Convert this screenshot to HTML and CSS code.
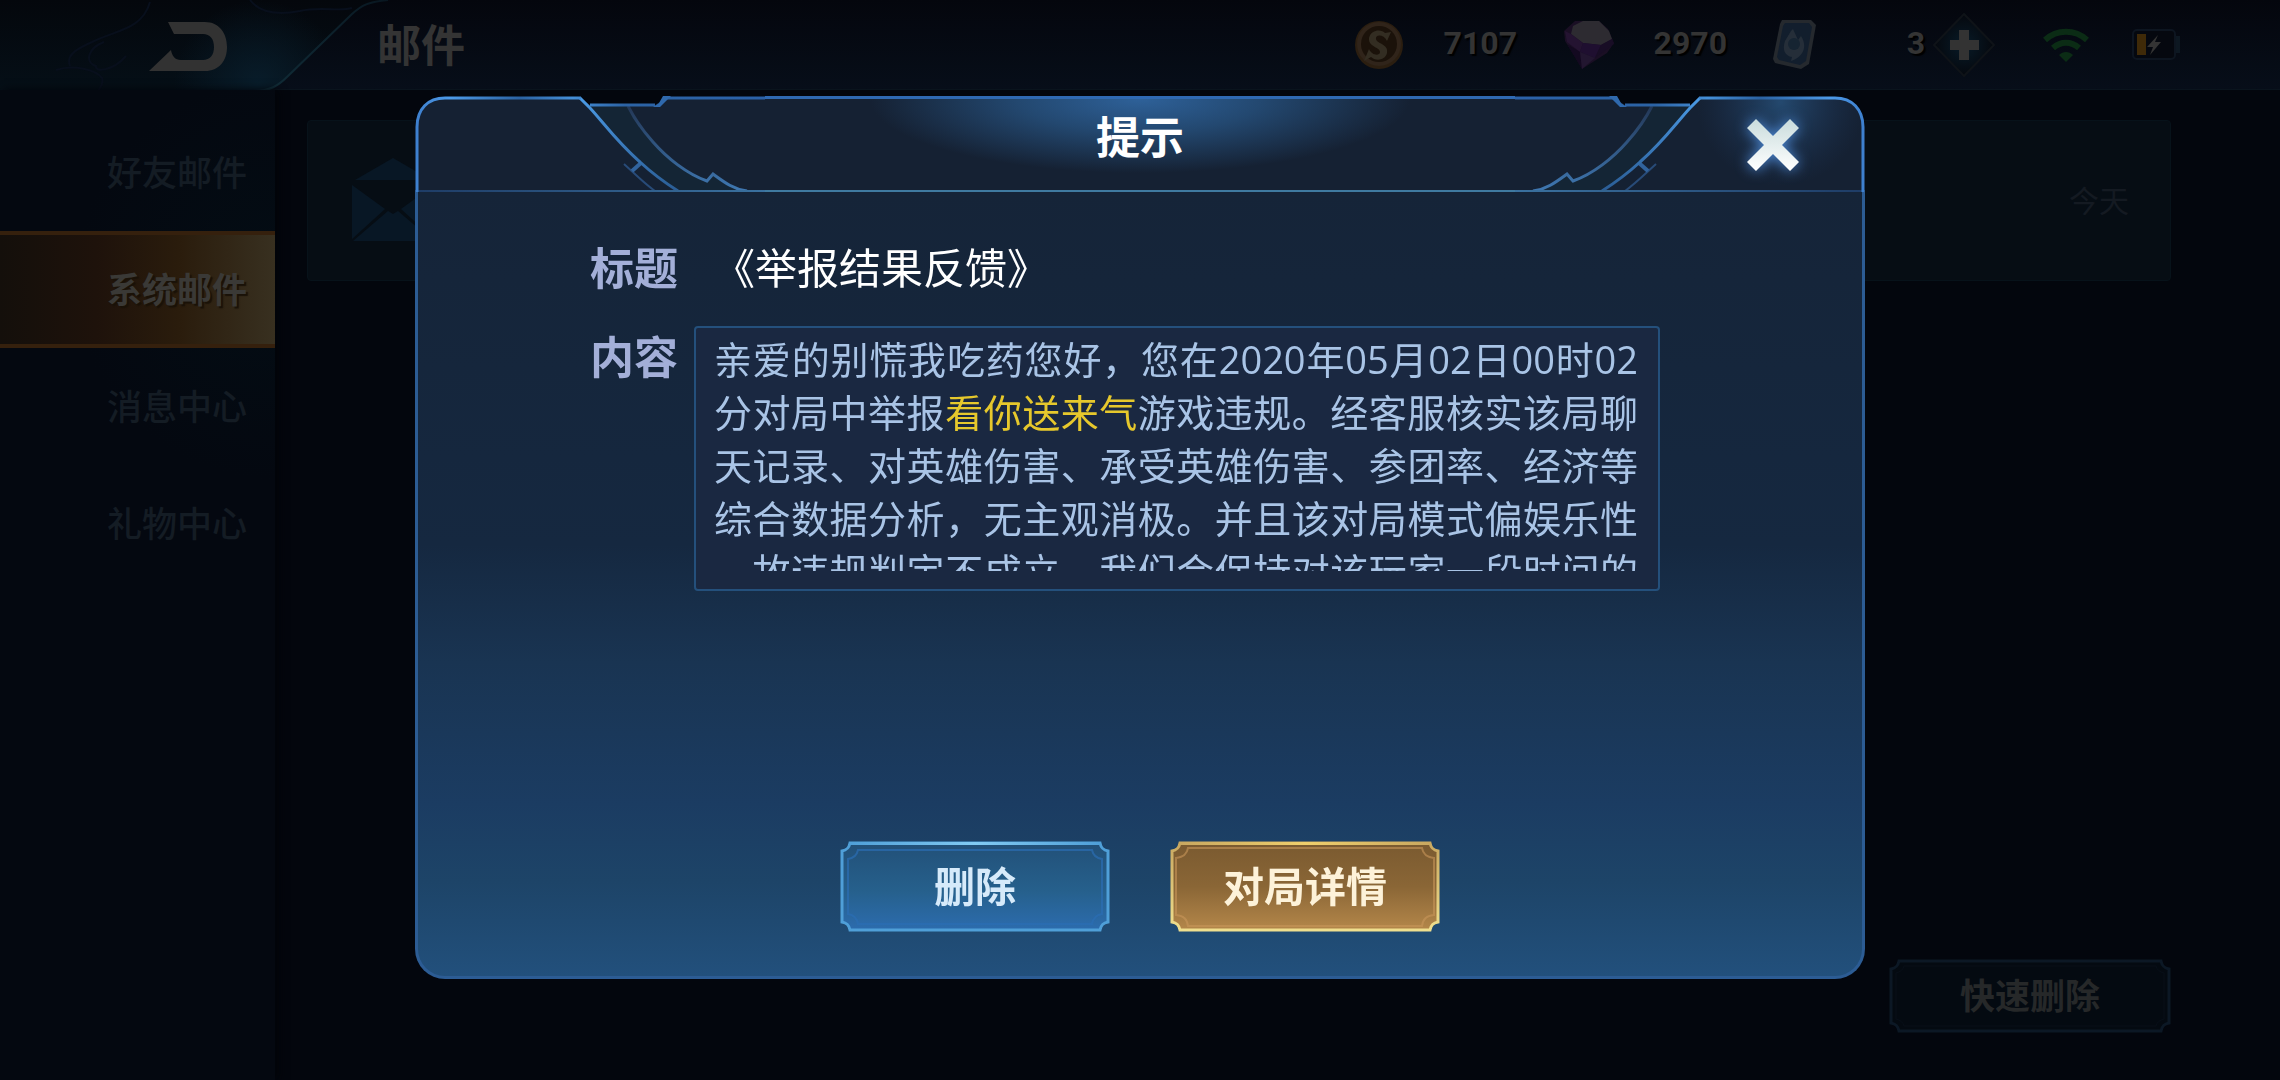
FILE: index.html
```html
<!DOCTYPE html>
<html lang="zh-CN">
<head>
<meta charset="utf-8">
<meta name="viewport" content="width=device-width, initial-scale=1">
<title>邮件</title>
<link rel="stylesheet" href="styles.css">
</head>
<body>
<div class="app">
  <header class="topbar">
    <button class="back" type="button" aria-label="返回">
      <svg class="back-art" viewBox="0 0 390 94" aria-hidden="true">
        <defs>
          <linearGradient id="backFill" x1="0" y1="0" x2="0" y2="1">
            <stop offset="0" stop-color="#04070c"/><stop offset="1" stop-color="#050f17"/>
          </linearGradient>
          <radialGradient id="backGlow" cx="258" cy="84" r="84" gradientUnits="userSpaceOnUse">
            <stop offset="0" stop-color="#09202f" stop-opacity=".8"/><stop offset="1" stop-color="#09202f" stop-opacity="0"/>
          </radialGradient>
          <linearGradient id="backLine" x1="0" y1="0" x2="1" y2="0">
            <stop offset="0" stop-color="#0a1820"/><stop offset=".65" stop-color="#12303b"/><stop offset="1" stop-color="#081620"/>
          </linearGradient>
        </defs>
        <path d="M0 0H388C368 2 362 5 352 14L288 76C278 86 270 91 254 91H0Z" fill="url(#backFill)"/>
        <path d="M0 0H388C368 2 362 5 352 14L288 76C278 86 270 91 254 91H0Z" fill="url(#backGlow)"/>
        <g fill="none" stroke="#080f1c" stroke-width="2">
          <path d="M150 2C142 30 116 30 92 42C74 50 66 56 70 66M126 56C112 72 94 72 96 66C84 62 88 48 104 42M56 70C74 64 96 70 102 78C104 84 100 88 98 91M250 0C262 16 284 14 300 11C320 6 340 12 352 8"/>
        </g>
        <path d="M388 0C368 2 362 5 352 14L288 76C278 86 270 91 254 91H0" fill="none" stroke="url(#backLine)" stroke-width="2"/>
        <path d="M168 22H205C219 22 227 33 227 47S219 71 205 71H149L171 50C172 56 175 60 181 60H203C210 60 214 55 214 47S210 34 203 34H174Z" fill="#323232"/>
      </svg>
    </button>
    <h1 class="page-title">邮件</h1>
    <ul class="wallet">
      <li class="coin-item">
        <svg width="52" height="52" viewBox="0 0 52 52" aria-hidden="true">
          <circle cx="26" cy="26" r="24" fill="#2b1e10"/>
          <circle cx="26" cy="25" r="22" fill="#30241a"/>
          <circle cx="26" cy="25" r="18" fill="#1b120a"/>
          <path d="M38 13L34 22C31 15 22 15 23 20C24 25 36 25 34 34C32 42 22 42 18 38L11 42L16 30C19 37 27 37 27 33C27 28 15 28 16 19C18 10 29 10 32 14Z" fill="#332d22"/>
        </svg>
        <span>7107</span>
      </li>
      <li class="gem-item">
        <svg width="52" height="52" viewBox="0 0 52 52" aria-hidden="true">
          <path d="M1 12L12 2H36L45 10L51 24L44 34L19 50L12 38L2 22Z" fill="#1a0f24"/>
          <path d="M10 7L20 2H36L46 12L49 20L38 26L20 24L8 15Z" fill="#2d2b31"/>
          <path d="M2 12L8 15L20 24L17 33L4 23Z" fill="#241331"/>
          <path d="M20 24L38 26L32 39L17 33Z" fill="#1f0f30"/>
          <path d="M38 26L49 20L51 25L32 39Z" fill="#180d25"/>
          <path d="M4 25L17 33L19 50Z" fill="#130920"/>
          <path d="M17 33L32 39L19 50Z" fill="#221630"/>
        </svg>
        <span>2970</span>
      </li>
      <li class="card-item">
        <svg width="44" height="52" viewBox="0 0 44 52" aria-hidden="true">
          <path d="M9 1L38 1L43 6L36 45L28 50L2 44L0 40L7 5Z" fill="#25292e"/>
          <path d="M12 4H36L39 8L33 42L27 46L6 41L4 38L10 7Z" fill="#121e2d"/>
          <path d="M18 12L12 22C9 31 12 37 19 38L18 42C30 38 35 28 28 17L25 21L20 10Z" fill="#252e39"/>
          <circle cx="21" cy="25" r="6" fill="#162432"/>
        </svg>
        <span>3</span>
      </li>
    </ul>
    <button class="plus" type="button" aria-label="添加">
      <svg width="64" height="64" viewBox="0 0 64 64" aria-hidden="true">
        <defs><radialGradient id="plusGlow"><stop offset="0" stop-color="#081b28"/><stop offset="1" stop-color="#05080e"/></radialGradient></defs>
        <path d="M32 1L62 32L32 63L2 32Z" fill="url(#plusGlow)" stroke="#0f1318" stroke-width="2"/>
        <path d="M27 17H37V27H47V37H37V47H27V37H18V27H27Z" fill="#333"/>
      </svg>
    </button>
    <svg class="wifi" width="46" height="34" viewBox="0 0 46 34" aria-hidden="true">
      <g fill="none" stroke="#0b2c15" stroke-width="6"><path d="M2 12C14 1 32 1 44 12"/><path d="M10 20C18 13 28 13 36 20"/></g>
      <path d="M16 27C20 23 26 23 30 27L23 34Z" fill="#0b2c15"/>
    </svg>
    <svg class="battery" width="48" height="32" viewBox="0 0 48 32" aria-hidden="true">
      <rect x="1" y="1" width="42" height="29" rx="4" fill="#05080f" stroke="#0d1520" stroke-width="2"/>
      <rect x="44" y="7" width="4" height="17" fill="#0d1822"/>
      <rect x="5" y="5" width="9" height="21" fill="#3f2a08"/>
      <path d="M26 6L15 18H21L18 26L29 13H23Z" fill="#343434"/>
    </svg>
  </header>

  <div class="content">
    <nav class="tabs">
      <a class="tab" href="#friends">好友邮件</a>
      <a class="tab tab-active" href="#system" aria-current="page">系统邮件</a>
      <a class="tab" href="#messages">消息中心</a>
      <a class="tab" href="#gifts">礼物中心</a>
    </nav>
    <main class="inbox">
      <article class="mail">
        <svg width="84" height="84" viewBox="0 0 84 84" aria-hidden="true">
          <path d="M42 1L80 23H4Z" fill="#081725"/>
          <path d="M1 28L34 52L1 82ZM83 28L50 52L83 82ZM37 54L42 57L47 54L82 84H2Z" fill="#081725"/>
        </svg>
        <time class="mail-time">今天</time>
      </article>
      <button class="btn quick-delete" type="button">
        <svg class="btn-frame" viewBox="0 0 282 74" preserveAspectRatio="none" aria-hidden="true">
          <path d="M10 2H272C273 7 275 9 280 10V64C275 65 273 67 272 72H10C9 67 7 65 2 64V10C7 9 9 7 10 2Z" fill="#040a11" stroke="#0c1825" stroke-width="3"/>
          <path d="M15 7H267C268 11 271 13 275 14V60C271 61 268 63 267 67H15C14 63 11 61 7 60V14C11 13 14 11 15 7Z" fill="none" stroke="#080f18"/>
        </svg>
        <span>快速删除</span>
      </button>
    </main>
  </div>
</div>

<div class="overlay">
  <section class="dialog" role="dialog" aria-modal="true" aria-labelledby="dialogTitle">
    <header class="dialog-head">
      <svg class="wing" viewBox="0 0 350 96" aria-hidden="true">
        <defs>
          <linearGradient id="edge" x1="0" y1="0" x2="350" y2="0" gradientUnits="userSpaceOnUse">
            <stop offset="0" stop-color="#3d7fce"/><stop offset=".1" stop-color="#4d9ae8"/><stop offset=".3" stop-color="#2b62a2"/><stop offset=".45" stop-color="#458fd8"/><stop offset=".6" stop-color="#2c63a5"/><stop offset="1" stop-color="#2b61a8"/>
          </linearGradient>
          <linearGradient id="diag" x1="0" y1="0" x2="0" y2="96" gradientUnits="userSpaceOnUse">
            <stop offset="0" stop-color="#4b9be6"/><stop offset="1" stop-color="#2a5c94"/>
          </linearGradient>
          <linearGradient id="arc" x1="0" y1="0" x2="0" y2="96" gradientUnits="userSpaceOnUse">
            <stop offset="0" stop-color="#20304c"/><stop offset="1" stop-color="#3f78b2"/>
          </linearGradient>
          <linearGradient id="base" x1="0" y1="0" x2="350" y2="0" gradientUnits="userSpaceOnUse">
            <stop offset="0" stop-color="#1e3c66"/><stop offset="1" stop-color="#3a719f"/>
          </linearGradient>
        </defs>
        <path d="M2 96V31C2 13 13 2 30 2H165L175 9H240L251 2H350V96Z" fill="#152133"/>
        <path d="M175 9H213C221 26 229 36 238 46C252 62 272 78 292 85L298 79C309 86 318 93 332 95H263C240 80 220 64 198 36Z" fill="#142535"/>
        <path d="M213 10C221 26 229 36 238 46C252 62 272 78 292 85L298 78C309 86 318 93 332 95" fill="none" stroke="url(#arc)" stroke-width="3"/>
        <path d="M209 68C220 78 230 88 240 95" fill="none" stroke="#284b78" stroke-width="2"/>
        <path d="M226 67L217 75" stroke="#31639d" stroke-width="4"/>
        <path d="M165 2L175 12C188 26 202 46 225 66C238 78 252 88 263 95" fill="none" stroke="url(#diag)" stroke-width="3"/>
        <path d="M0 95H350" stroke="url(#base)" stroke-width="2"/>
        <path d="M2 96V31C2 13 13 2 30 2H166M175 9H240M251 2H350" fill="none" stroke="url(#edge)" stroke-width="3"/>
        <path d="M238 11L244 7L248 0H256L245 11Z" fill="#2f69ad"/>
      </svg>
      <h2 class="dialog-title" id="dialogTitle">提示</h2>
      <svg class="wing wing-right" viewBox="0 0 350 96" aria-hidden="true">
        <defs>
          <radialGradient id="closeGlow" cx="84" cy="6" r="84" gradientUnits="userSpaceOnUse">
            <stop offset="0" stop-color="#24496f"/><stop offset="1" stop-color="#1c3354" stop-opacity="0"/>
          </radialGradient>
        </defs>
        <path d="M2 96V31C2 13 13 2 30 2H165L175 9H240L251 2H350V96Z" fill="#152133"/>
        <path d="M2 96V31C2 13 13 2 30 2H165L195 34L225 66L263 96Z" fill="url(#closeGlow)"/>
        <path d="M175 9H213C221 26 229 36 238 46C252 62 272 78 292 85L298 79C309 86 318 93 332 95H263C240 80 220 64 198 36Z" fill="#142535"/>
        <path d="M213 10C221 26 229 36 238 46C252 62 272 78 292 85L298 78C309 86 318 93 332 95" fill="none" stroke="url(#arc)" stroke-width="3"/>
        <path d="M209 68C220 78 230 88 240 95" fill="none" stroke="#284b78" stroke-width="2"/>
        <path d="M226 67L217 75" stroke="#31639d" stroke-width="4"/>
        <path d="M165 2L175 12C188 26 202 46 225 66C238 78 252 88 263 95" fill="none" stroke="url(#diag)" stroke-width="3"/>
        <path d="M0 95H350" stroke="url(#base)" stroke-width="2"/>
        <path d="M2 96V31C2 13 13 2 30 2H166M175 9H240M251 2H350" fill="none" stroke="url(#edge)" stroke-width="3"/>
        <path d="M238 11L244 7L248 0H256L245 11Z" fill="#2f69ad"/>
      </svg>
      <button class="close" type="button" aria-label="关闭">
        <svg width="52" height="52" viewBox="0 0 52 52" aria-hidden="true">
          <defs><linearGradient id="closeFill" x1="0" y1="0" x2="0" y2="1"><stop offset="0" stop-color="#c9dcdc"/><stop offset="1" stop-color="#fff"/></linearGradient></defs>
          <path d="M9 0L26 17L43 0L52 9L35 26L52 43L43 52L26 35L9 52L0 43L17 26L0 9Z" fill="url(#closeFill)"/>
        </svg>
      </button>
    </header>
    <div class="dialog-body">
      <dl class="fields">
        <dt>标题</dt>
        <dd class="subject">《举报结果反馈》</dd>
        <dt>内容</dt>
        <dd class="message">
          <div class="message-scroll">
            <p>亲爱的别慌我吃药您好，您在2020年05月02日00时02分对局中举报<em>看你送来气</em>游戏违规。经客服核实该局聊天记录、对英雄伤害、承受英雄伤害、参团率、经济等综合数据分析，无主观消极。并且该对局模式偏娱乐性，故违规判定不成立，我们会保持对该玩家一段时间的</p>
          </div>
        </dd>
      </dl>
      <div class="actions">
        <button class="btn btn-blue" type="button">
          <svg class="btn-frame" viewBox="0 0 270 91" preserveAspectRatio="none" aria-hidden="true">
            <defs>
              <linearGradient id="blueFill" x1="0" y1="0" x2="0" y2="1"><stop offset="0" stop-color="#225078"/><stop offset=".55" stop-color="#26608c"/><stop offset="1" stop-color="#2c6cae"/></linearGradient>
              <linearGradient id="blueShine" x1="0" y1="0" x2="1" y2="0"><stop offset="0" stop-color="#4f9fd8"/><stop offset=".5" stop-color="#82cbf3"/><stop offset="1" stop-color="#4f9fd8"/></linearGradient>
            </defs>
            <path d="M10 2H260C261 7 263 9 268 10V81C263 82 261 84 260 89H10C9 84 7 82 2 81V10C7 9 9 7 10 2Z" fill="url(#blueFill)" stroke="#4f9fd8" stroke-width="3"/>
            <path d="M18 9H252C253 14 256 17 262 18V73C256 74 253 77 252 83H18C17 77 14 74 8 73V18C14 17 17 14 18 9Z" fill="none" stroke="#2b6db4" stroke-opacity=".7" stroke-width="2"/>
            <path d="M10 1H260V4H10Z" fill="url(#blueShine)"/>
          </svg>
          <span>删除</span>
        </button>
        <button class="btn btn-gold" type="button">
          <svg class="btn-frame" viewBox="0 0 270 91" preserveAspectRatio="none" aria-hidden="true">
            <defs>
              <linearGradient id="goldFill" x1="0" y1="0" x2="0" y2="1"><stop offset="0" stop-color="#7a5a30"/><stop offset=".5" stop-color="#8a6636"/><stop offset="1" stop-color="#b4874a"/></linearGradient>
              <linearGradient id="goldEdge" x1="0" y1="0" x2="0" y2="1"><stop offset="0" stop-color="#c9a860"/><stop offset="1" stop-color="#efdf8e"/></linearGradient>
              <linearGradient id="goldShine" x1="0" y1="0" x2="1" y2="0"><stop offset="0" stop-color="#c9a860"/><stop offset=".5" stop-color="#f0cf6c"/><stop offset="1" stop-color="#c9a860"/></linearGradient>
            </defs>
            <path d="M10 2H260C261 7 263 9 268 10V81C263 82 261 84 260 89H10C9 84 7 82 2 81V10C7 9 9 7 10 2Z" fill="url(#goldFill)" stroke="url(#goldEdge)" stroke-width="3"/>
            <path d="M18 7H252C253 13 256 16 264 17V74C256 75 253 78 252 85H18C17 78 14 75 6 74V17C14 16 17 13 18 7Z" fill="none" stroke="#c8965a" stroke-opacity=".6" stroke-width="2"/>
            <path d="M10 1H260V4H10Z" fill="url(#goldShine)"/>
          </svg>
          <span>对局详情</span>
        </button>
      </div>
    </div>
  </section>
</div>
</body>
</html>
```

FILE: styles.css
```css
* { box-sizing: border-box; }

body {
  margin: 0;
  background: #03060d;
  font-family: "Noto Sans CJK SC", "Noto Sans", sans-serif;
  color: #323232;
}

button {
  margin: 0;
  padding: 0;
  border: 0;
  background: none;
  font: inherit;
  color: inherit;
  cursor: pointer;
}

h1, h2, p, ul, dl, dd { margin: 0; padding: 0; }
svg { display: block; }

/* Mail page behind the dialog */
.app {
  display: flex;
  flex-direction: column;
  min-height: 100vh;
}

.topbar {
  display: flex;
  align-items: center;
  height: 90px;
  padding-right: 100px;
  background: linear-gradient(#04060d, #070e19);
  border-bottom: 1px solid #0a141d;
}

.back {
  flex: none;
  align-self: flex-start;
  width: 377px;
  height: 90px;
}

.back-art {
  width: 390px;
  height: 94px;
}

.page-title {
  padding-bottom: 4px;
  font-size: 44px;
  line-height: 60px;
  font-weight: 700;
  color: #343434;
}

.wallet {
  display: flex;
  gap: 46px;
  margin-left: auto;
  list-style: none;
}

.wallet li {
  display: flex;
  align-items: center;
  font: 700 32px/40px Roboto, sans-serif;
  color: #343434;
  text-shadow: 2px 2px 1px #000;
}

.wallet span {
  width: 112px;
  padding-bottom: 4px;
  text-align: right;
}

.wallet .card-item span { width: 108px; }
.plus { margin-left: 7px; }
.wifi { margin-left: 47px; }
.battery { margin-left: 43px; }

.content {
  display: flex;
  flex: 1;
}

.tabs {
  flex: none;
  width: 275px;
  padding-top: 24px;
  background: radial-gradient(circle at 275px 190px, #03101799, #04081000 200px), #040810;
  box-shadow: 4px 0 8px #020409;
}

.tab {
  display: block;
  height: 117px;
  padding-right: 28px;
  font-size: 35px;
  line-height: 114px;
  font-weight: 500;
  text-align: right;
  text-decoration: none;
  color: #141c24;
}

.tab-active {
  border-top: 4px solid #35200d;
  border-bottom: 4px solid #35200d;
  background: linear-gradient(90deg, #140f0b, #1e120b 35%, #2a1c0c 65%, #383020);
  line-height: 106px;
  font-weight: 700;
  color: #3a3936;
  text-shadow: 2px 2px 1px #1a1208;
}

.inbox {
  display: flex;
  flex: 1;
  flex-direction: column;
  align-items: flex-end;
  justify-content: space-between;
  padding: 30px 109px 47px 32px;
}

.mail {
  display: flex;
  align-items: center;
  justify-content: space-between;
  width: 100%;
  height: 161px;
  padding: 0 41px 4px 43px;
  border: 1px solid #07121a;
  border-radius: 4px;
  background: #060d14;
}

.mail-time {
  font-size: 30px;
  line-height: 40px;
  color: #141a22;
}

/* Notched buttons */
.btn {
  position: relative;
  width: 270px;
  height: 91px;
  padding-bottom: 4px;
  font-size: 41px;
  line-height: 60px;
  font-weight: 700;
}

.btn span { position: relative; }

.btn-frame {
  position: absolute;
  inset: 0;
  width: 100%;
  height: 100%;
}

.btn-blue { color: #d6eafa; }
.btn-gold { color: #fdf2d9; }

.quick-delete {
  width: 282px;
  height: 74px;
  font-size: 35px;
  color: #262829;
}

/* Dialog */
.overlay {
  position: fixed;
  inset: 0;
  display: flex;
  align-items: center;
  justify-content: center;
  padding: 0 24px 6px;
}

.dialog {
  display: flex;
  flex-direction: column;
  width: 100%;
  max-width: 1450px;
}

.dialog-head {
  position: relative;
  display: flex;
  height: 96px;
}

.wing {
  flex: none;
  width: 350px;
  height: 96px;
}

.wing-right { transform: scaleX(-1); }

.dialog-title {
  flex: 1;
  border-top: 3px solid #2f69b2;
  border-bottom: 2px solid #3f7aa0;
  background: radial-gradient(ellipse 270px 74px at 50% 0, #2e6199, #234870 45%, #15213300), #152133;
  font-size: 44px;
  line-height: 72px;
  font-weight: 700;
  text-align: center;
  color: #fff;
}

.close {
  position: absolute;
  top: 11px;
  right: 54px;
  display: grid;
  place-items: center;
  width: 76px;
  height: 76px;
  filter: drop-shadow(0 0 7px #4f8ddc);
}

.dialog-body {
  display: flex;
  flex-direction: column;
  justify-content: space-between;
  min-height: 787px;
  padding: 45px 202px 44px 172px;
  border: 3px solid #2c5c94;
  border-top: 0;
  border-radius: 0 0 30px 30px;
  background: linear-gradient(#152438, #152840 45%, #193452 60%, #1b3c62 78%, #1d4468 88%, #22507c);
}

.fields {
  display: grid;
  grid-template-columns: 104px 1fr;
  row-gap: 31px;
}

.fields dt {
  font-size: 44px;
  line-height: 58px;
  font-weight: 700;
  color: #a3afd8;
}

.subject {
  padding-left: 19px;
  font-size: 42px;
  line-height: 58px;
  color: #fff;
}

.message {
  padding: 5px 20px 18px 18px;
  border: 2px solid #24507c;
  border-radius: 4px;
  background: #1a2841;
}

.message-scroll {
  height: 238px;
  overflow-y: auto;
  scrollbar-width: none;
  font-family: "Open Sans", "Noto Sans CJK SC", sans-serif;
  font-size: 38px;
  line-height: 53px;
  font-weight: 400;
  color: #a9c4e6;
}

.message-scroll p {
  line-break: anywhere;
  text-align: justify;
  text-align-last: justify;
}

.message-scroll em {
  font-style: normal;
  color: #e6c82c;
}

.actions {
  display: flex;
  justify-content: center;
  gap: 60px;
  padding-left: 30px;
}
```
